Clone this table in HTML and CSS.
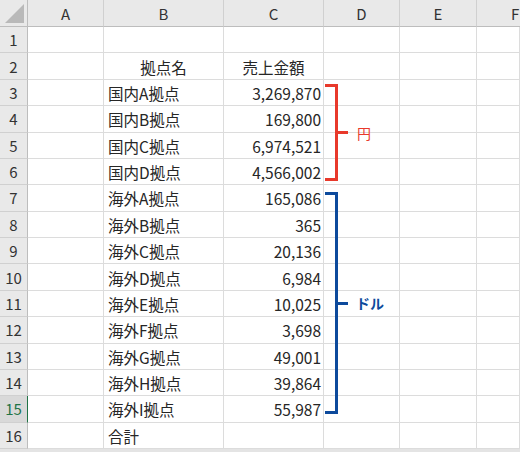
FILE: index.html
```html
<!DOCTYPE html>
<html lang="ja">
<head>
<meta charset="utf-8">
<link rel="stylesheet" href="styles.css">
</head>
<body>
<div class="sheet">
  <div class="grid">
    <div class="corner"><span class="tri"></span></div>
    <div class="colhead">A</div>
    <div class="colhead">B</div>
    <div class="colhead">C</div>
    <div class="colhead">D</div>
    <div class="colhead">E</div>
    <div class="colhead last">F</div>

    <div class="rowhead">1</div><div class="cell"></div><div class="cell"></div><div class="cell"></div><div class="cell"></div><div class="cell"></div><div class="cell"></div>
    <div class="rowhead">2</div><div class="cell"></div><div class="cell center">拠点名</div><div class="cell center">売上金額</div><div class="cell"></div><div class="cell"></div><div class="cell"></div>
    <div class="rowhead">3</div><div class="cell"></div><div class="cell">国内A拠点</div><div class="cell num">3,269,870</div><div class="cell"></div><div class="cell"></div><div class="cell"></div>
    <div class="rowhead">4</div><div class="cell"></div><div class="cell">国内B拠点</div><div class="cell num">169,800</div><div class="cell"></div><div class="cell"></div><div class="cell"></div>
    <div class="rowhead">5</div><div class="cell"></div><div class="cell">国内C拠点</div><div class="cell num">6,974,521</div><div class="cell"></div><div class="cell"></div><div class="cell"></div>
    <div class="rowhead">6</div><div class="cell"></div><div class="cell">国内D拠点</div><div class="cell num">4,566,002</div><div class="cell"></div><div class="cell"></div><div class="cell"></div>
    <div class="rowhead">7</div><div class="cell"></div><div class="cell">海外A拠点</div><div class="cell num">165,086</div><div class="cell"></div><div class="cell"></div><div class="cell"></div>
    <div class="rowhead">8</div><div class="cell"></div><div class="cell">海外B拠点</div><div class="cell num">365</div><div class="cell"></div><div class="cell"></div><div class="cell"></div>
    <div class="rowhead">9</div><div class="cell"></div><div class="cell">海外C拠点</div><div class="cell num">20,136</div><div class="cell"></div><div class="cell"></div><div class="cell"></div>
    <div class="rowhead">10</div><div class="cell"></div><div class="cell">海外D拠点</div><div class="cell num">6,984</div><div class="cell"></div><div class="cell"></div><div class="cell"></div>
    <div class="rowhead">11</div><div class="cell"></div><div class="cell">海外E拠点</div><div class="cell num">10,025</div><div class="cell"></div><div class="cell"></div><div class="cell"></div>
    <div class="rowhead">12</div><div class="cell"></div><div class="cell">海外F拠点</div><div class="cell num">3,698</div><div class="cell"></div><div class="cell"></div><div class="cell"></div>
    <div class="rowhead">13</div><div class="cell"></div><div class="cell">海外G拠点</div><div class="cell num">49,001</div><div class="cell"></div><div class="cell"></div><div class="cell"></div>
    <div class="rowhead">14</div><div class="cell"></div><div class="cell">海外H拠点</div><div class="cell num">39,864</div><div class="cell"></div><div class="cell"></div><div class="cell"></div>
    <div class="rowhead active">15</div><div class="cell"></div><div class="cell">海外I拠点</div><div class="cell num">55,987</div><div class="cell"></div><div class="cell"></div><div class="cell"></div>
    <div class="rowhead">16</div><div class="cell"></div><div class="cell">合計</div><div class="cell"></div><div class="cell"></div><div class="cell"></div><div class="cell"></div>
  </div>

  <div class="bracket yen"><span class="label">円</span></div>
  <div class="bracket dollar"><span class="label">ドル</span></div>
</div>
</body>
</html>
```

FILE: styles.css
```css
html, body {
  margin: 0;
  padding: 0;
}
body {
  background: #e4e4e4;
  width: 520px;
  height: 452px;
  overflow: hidden;
  font-family: "Noto Sans CJK JP", "Noto Sans", sans-serif;
  color: #262626;
}
.sheet {
  position: relative;
  width: 520px;
  height: 449px;
  background: #ffffff;
}
.grid {
  display: grid;
  grid-template-columns: 28px 76px 120px 100px 76px 77px 43px;
  grid-template-rows: 27px repeat(16, 1fr);
  height: 449px;
}
.corner {
  background: #e9e9e9;
  border-right: 1px solid #bdbdbd;
  border-bottom: 1px solid #bdbdbd;
  position: relative;
}
.tri {
  position: absolute;
  right: 3px;
  bottom: 3px;
  width: 0;
  height: 0;
  border-left: 19px solid transparent;
  border-bottom: 19px solid #b9b9b9;
}
.colhead {
  background: #e9e9e9;
  border-right: 1px solid #d0d0d0;
  border-bottom: 1px solid #bdbdbd;
  display: flex;
  align-items: center;
  justify-content: center;
  font-size: 15px;
  color: #333;
  padding-top: 1px;
}
.colhead.last {
  justify-content: flex-start;
  padding-left: 34px;
  border-right: 0;
  overflow: hidden;
}
.rowhead {
  background: #e9e9e9;
  border-right: 1px solid #bdbdbd;
  border-bottom: 1px solid #d0d0d0;
  display: flex;
  align-items: center;
  justify-content: center;
  font-size: 15px;
  color: #333;
}
.rowhead.active {
  background: #d9d9d9;
  color: #217346;
  border-right: 1px solid #217346;
}
.cell {
  border-right: 1px solid #dcdcdc;
  border-bottom: 1px solid #dcdcdc;
  display: flex;
  align-items: center;
  padding: 1px 4px 0 4px;
  font-size: 15.5px;
  white-space: nowrap;
  overflow: hidden;
}
.cell.center {
  justify-content: center;
}
.cell.num {
  justify-content: flex-end;
  padding-right: 2px;
}
.bracket {
  position: absolute;
  left: 325px;
  width: 10px;
  border-style: solid;
  border-width: 3px 3px 3px 0;
}
.bracket::after {
  content: "";
  position: absolute;
  left: 13px;
  top: 50%;
  width: 10px;
  height: 3px;
  margin-top: -1.5px;
  background: currentColor;
}
.bracket .label {
  position: absolute;
  top: 50%;
  transform: translateY(-50%);
  white-space: nowrap;
  font-size: 14px;
  line-height: 1;
}
.yen {
  top: 84px;
  height: 91px;
  border-color: #e8392b;
  color: #e8392b;
}
.yen .label {
  left: 32px;
}
.dollar {
  top: 192px;
  height: 216px;
  border-color: #0d4a9c;
  color: #0d4a9c;
}
.dollar .label {
  left: 31px;
  font-weight: bold;
}
```
